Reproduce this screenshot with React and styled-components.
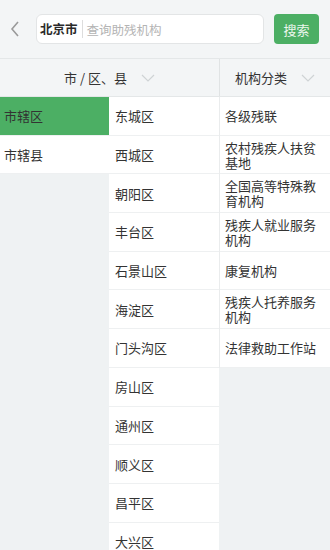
import styled, { createGlobalStyle } from "styled-components";

const GlobalStyle = createGlobalStyle`
  html, body {
    margin: 0;
    padding: 0;
    background: #eff2f3;
    font-family: "Noto Sans CJK SC", "Noto Sans", sans-serif;
  }
  * { box-sizing: border-box; }
`;

const Page = styled.div`
  width: 330px;
  height: 550px;
  overflow: hidden;
  background: #eff2f3;
  color: #333;
`;

const Header = styled.div`
  height: 59px;
  display: flex;
  align-items: center;
  padding: 0 11px 0 10px;
  background: #f3f5f6;
  border-bottom: 1px solid #e4e7e8;
`;

const Back = styled.div`
  width: 26px;
  display: flex;
  align-items: center;
  color: #999;
`;

const SearchBox = styled.div`
  flex: 1;
  height: 30px;
  display: flex;
  align-items: center;
  background: #fff;
  border: 1px solid #e3e5e6;
  border-radius: 6px;
  padding-left: 3px;
  font-size: 12.5px;
`;

const City = styled.span`
  font-weight: 700;
  color: #2a2a2a;
  padding-right: 4px;
  border-right: 1px solid #ddd;
  line-height: 18px;
`;

const Placeholder = styled.span`
  color: #b4b4b4;
  padding-left: 4px;
`;

const SearchButton = styled.button`
  margin-left: 10px;
  width: 45px;
  height: 30px;
  border: none;
  border-radius: 4px;
  background: #4caf64;
  color: #eaf6ec;
  font-family: inherit;
  font-size: 13px;
  padding: 0;
`;

const Tabs = styled.div`
  display: flex;
  height: 38px;
  background: #f3f5f6;
  border-bottom: 1px solid #e4e7e8;
`;

const Tab = styled.div`
  width: ${(p) => p.$w}px;
  display: flex;
  align-items: center;
  justify-content: center;
  gap: 14px;
  font-size: 13px;
  color: #333;
  border-left: ${(p) => (p.$divider ? "1px solid #e0e3e4" : "none")};
`;

const Columns = styled.div`
  display: flex;
  align-items: flex-start;
`;

const Column = styled.div`
  width: ${(p) => p.$w}px;
  display: flex;
  flex-direction: column;
  border-left: ${(p) => (p.$divider ? "1px solid #eaeced" : "none")};
`;

const Item = styled.div`
  height: 38.7px;
  display: flex;
  align-items: center;
  padding: 0 5px 0 ${(p) => p.$pad}px;
  font-size: 13px;
  line-height: 15px;
  color: #333;
  background: ${(p) => (p.$active ? "#4caf64" : "#fff")};
  border-bottom: 1px solid #eef0f1;
`;

const Chevron = () => (
  <svg width="14" height="8" viewBox="0 0 14 8">
    <path d="M1 1l6 6 6-6" fill="none" stroke="#cfd3d5" strokeWidth="1.2" />
  </svg>
);

const levels = ["市辖区", "市辖县"];
const districts = [
  "东城区", "西城区", "朝阳区", "丰台区", "石景山区", "海淀区",
  "门头沟区", "房山区", "通州区", "顺义区", "昌平区", "大兴区",
];
const kinds = [
  "各级残联", "农村残疾人扶贫基地", "全国高等特殊教育机构", "残疾人就业服务机构",
  "康复机构", "残疾人托养服务机构", "法律救助工作站",
];

export default function App() {
  return (
    <Page>
      <GlobalStyle />
      <Header>
        <Back>
          <svg width="10" height="16" viewBox="0 0 10 16">
            <path d="M8 1L2 8l6 7" fill="none" stroke="#9a9a9a" strokeWidth="1.6" />
          </svg>
        </Back>
        <SearchBox>
          <City>北京市</City>
          <Placeholder>查询助残机构</Placeholder>
        </SearchBox>
        <SearchButton>搜索</SearchButton>
      </Header>
      <Tabs>
        <Tab $w={219}>
          <span>市 / 区、县</span>
          <Chevron />
        </Tab>
        <Tab $w={111} $divider>
          <span>机构分类</span>
          <Chevron />
        </Tab>
      </Tabs>
      <Columns>
        <Column $w={109}>
          {levels.map((t, i) => (
            <Item key={t} $pad={4} $active={i === 0}>{t}</Item>
          ))}
        </Column>
        <Column $w={110}>
          {districts.map((t) => (
            <Item key={t} $pad={6}>{t}</Item>
          ))}
        </Column>
        <Column $w={111} $divider>
          {kinds.map((t) => (
            <Item key={t} $pad={5}>{t}</Item>
          ))}
        </Column>
      </Columns>
    </Page>
  );
}
